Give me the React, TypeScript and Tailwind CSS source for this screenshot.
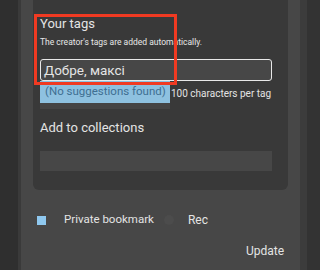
export default function App() {
  return (
    <div
      className="relative flex h-[270px] w-[320px] overflow-hidden bg-[#2e2e2e] text-[#e4e4e4]"
      style={{ fontFamily: "Roboto, 'Noto Sans', sans-serif" }}
    >
      {/* left gutter */}
      <div className="w-[18px] shrink-0 bg-[#2f2f2f]" />
      <div className="w-[3px] shrink-0 bg-[#3a3a3a]" />

      {/* main panel */}
      <div className="flex w-[279px] shrink-0 flex-col bg-[#474747] px-[12px]">
        {/* tags card */}
        <div className="flex h-[190px] flex-col rounded-b-md bg-[#393939] px-[7px] pt-[16px]">
          <div className="text-[13px] leading-[16px]">Your tags</div>
          <div className="mt-[5px] whitespace-nowrap text-[8.5px] leading-[10px] text-[#e8e8e8]">
            The creator's tags are added automatically.
          </div>
          <div className="mt-[12px] flex h-[22px] w-[232px] items-center whitespace-nowrap rounded-[3px] border-[1.5px] border-[#e8e8e8] bg-[#474747] px-[3px] text-[13.5px]">
            Добре, максі
          </div>
          <div className="flex items-start">
            <div className="flex w-[130px] shrink-0 flex-col">
              <div className="flex h-[22px] items-center whitespace-nowrap bg-[#8ec1e0] pl-[5px] text-[11.5px] text-[#3f6f92]">
                (No suggestions found)
              </div>
              <div className="h-[6px] bg-[#444]" />
            </div>
            <div className="mt-[6px] ml-[1px] whitespace-nowrap text-[10px] leading-[13px]">100 characters per tag</div>
          </div>
          <div className="mt-[11px] text-[13px] leading-[16px]">Add to collections</div>
          <div className="mt-[15px] h-[20px] w-[232px] bg-[#474747]" />
        </div>

        {/* options row */}
        <div className="mt-[21px] flex items-center">
          <div className="ml-[4px] h-[9px] w-[9px] bg-[#8fc8ef]" />
          <span className="ml-[18px] text-[11.5px]">Private bookmark</span>
          <div className="ml-[10px] h-[10px] w-[10px] rounded-full bg-[#4c4c4c]" />
          <span className="ml-[14px] text-[12px]">Rec</span>
        </div>
        <div className="mt-[13px] flex justify-end pr-[4px]">
          <span className="text-[12px]">Update</span>
        </div>
      </div>

      {/* right gutter */}
      <div className="w-[7px] shrink-0 bg-[#3c3c3c]" />
      <div className="flex-1 bg-[#333]" />

      {/* annotation box */}
      <div className="absolute left-[34px] top-[14px] h-[71px] w-[143px] border-[3px] border-[#f03a22]" />
    </div>
  );
}
